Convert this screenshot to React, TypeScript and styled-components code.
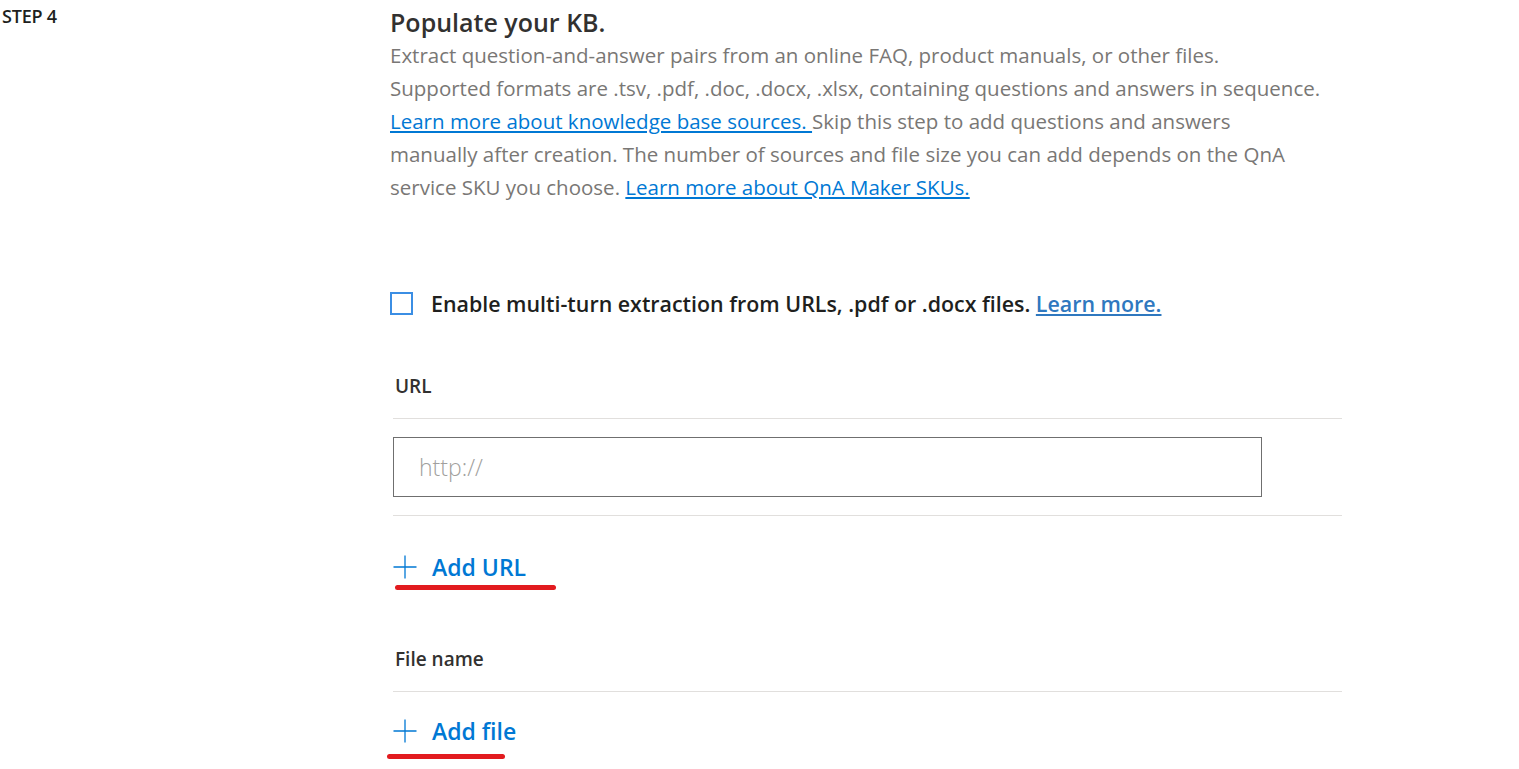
import styled, { createGlobalStyle } from 'styled-components';

const GlobalStyle = createGlobalStyle`
  body {
    margin: 0;
    background: #ffffff;
    font-family: 'Open Sans', 'Noto Sans', sans-serif;
    color: #323130;
  }
`;

const Page = styled.div`
  display: grid;
  grid-template-columns: 390px 952px;
  width: 1519px;
  height: 769px;
  overflow: hidden;
`;

const StepLabel = styled.div`
  padding: 5px 0 0 2px;
  font-size: 18px;
  font-weight: 600;
  line-height: 22px;
  color: #201f1e;
  letter-spacing: -0.2px;
`;

const Content = styled.div`
  display: flex;
  flex-direction: column;
`;

const Title = styled.h2`
  margin: 7px 0 0;
  font-size: 25px;
  font-weight: 600;
  line-height: 30px;
  color: #323130;
`;

const Description = styled.p`
  margin: 2px 0 0;
  font-size: 20.5px;
  font-weight: 400;
  line-height: 33px;
  color: #797775;
  white-space: nowrap;
`;

const Link = styled.a<{ $tone?: string }>`
  color: ${(p) => p.$tone ?? '#0078d4'};
  text-decoration: underline;
  cursor: pointer;
`;

const CheckRow = styled.label`
  display: flex;
  align-items: center;
  gap: 18px;
  margin-top: 87px;
  height: 24px;
  font-size: 21.4px;
  font-weight: 600;
  color: #201f1e;
  white-space: nowrap;
`;

const Box = styled.span`
  box-sizing: border-box;
  width: 23px;
  height: 23px;
  border: 2px solid #3b8ee4;
  background: #fff;
  flex-shrink: 0;
`;

const Section = styled.div<{ $top: number }>`
  margin-top: ${(p) => p.$top}px;
  display: flex;
  flex-direction: column;
`;

const FieldLabel = styled.div`
  margin-left: 3px;
  padding: 0 0 21px 2px;
  font-size: 19px;
  font-weight: 600;
  line-height: 22px;
  color: #323130;
  border-bottom: 1px solid #e1dfdd;
`;

const InputRow = styled.div`
  margin-left: 3px;
  padding: 18px 0;
  border-bottom: 1px solid #e1dfdd;
`;

const UrlInput = styled.input`
  box-sizing: border-box;
  width: 869px;
  height: 60px;
  padding: 0 25px;
  border: 1px solid #6f6f6f;
  font-family: inherit;
  font-size: 23px;
  font-weight: 300;
  color: #323130;
  outline: none;

  &::placeholder {
    color: #a19f9d;
  }
`;

const AddButton = styled.button<{ $top: number; $markLeft: number; $markWidth: number; $markTop: number }>`
  position: relative;
  align-self: flex-start;
  display: flex;
  align-items: center;
  gap: 15px;
  margin: ${(p) => p.$top}px 0 0 3px;
  padding: 0;
  height: 30px;
  border: none;
  background: none;
  font-family: inherit;
  font-size: 23px;
  font-weight: 600;
  color: #0078d4;
  cursor: pointer;

  &::after {
    content: '';
    position: absolute;
    left: ${(p) => p.$markLeft}px;
    top: ${(p) => p.$markTop}px;
    width: ${(p) => p.$markWidth}px;
    height: 5px;
    border-radius: 3px;
    background: #e21b1f;
  }
`;

const PlusIcon = () => (
  <svg width="24" height="24" viewBox="0 0 24 24" fill="none">
    <path d="M12 0.5V23.5M0.5 12H23.5" stroke="#0078d4" strokeWidth="1.3" />
  </svg>
);

export default function App() {
  return (
    <>
      <GlobalStyle />
      <Page>
        <StepLabel>STEP 4</StepLabel>
        <Content>
          <Title>Populate your KB.</Title>
          <Description>
            Extract question-and-answer pairs from an online FAQ, product manuals, or other files.
            <br />
            Supported formats are .tsv, .pdf, .doc, .docx, .xlsx, containing questions and answers in sequence.
            <br />
            <Link>Learn more about knowledge base sources. </Link>Skip this step to add questions and answers
            <br />
            manually after creation. The number of sources and file size you can add depends on the QnA
            <br />
            service SKU you choose. <Link>Learn more about QnA Maker SKUs.</Link>
          </Description>

          <CheckRow>
            <Box />
            <span>
              Enable multi-turn extraction from URLs, .pdf or .docx files.{' '}
              <Link $tone="#2f78bf">Learn more.</Link>
            </span>
          </CheckRow>

          <Section $top={60}>
            <FieldLabel>URL</FieldLabel>
            <InputRow>
              <UrlInput placeholder="http://" />
            </InputRow>
            <AddButton $top={36} $markLeft={2} $markWidth={161} $markTop={33}>
              <PlusIcon />
              Add URL
            </AddButton>
          </Section>

          <Section $top={66}>
            <FieldLabel>File name</FieldLabel>
            <AddButton $top={24} $markLeft={-6} $markWidth={118} $markTop={38}>
              <PlusIcon />
              Add file
            </AddButton>
          </Section>
        </Content>
      </Page>
    </>
  );
}
